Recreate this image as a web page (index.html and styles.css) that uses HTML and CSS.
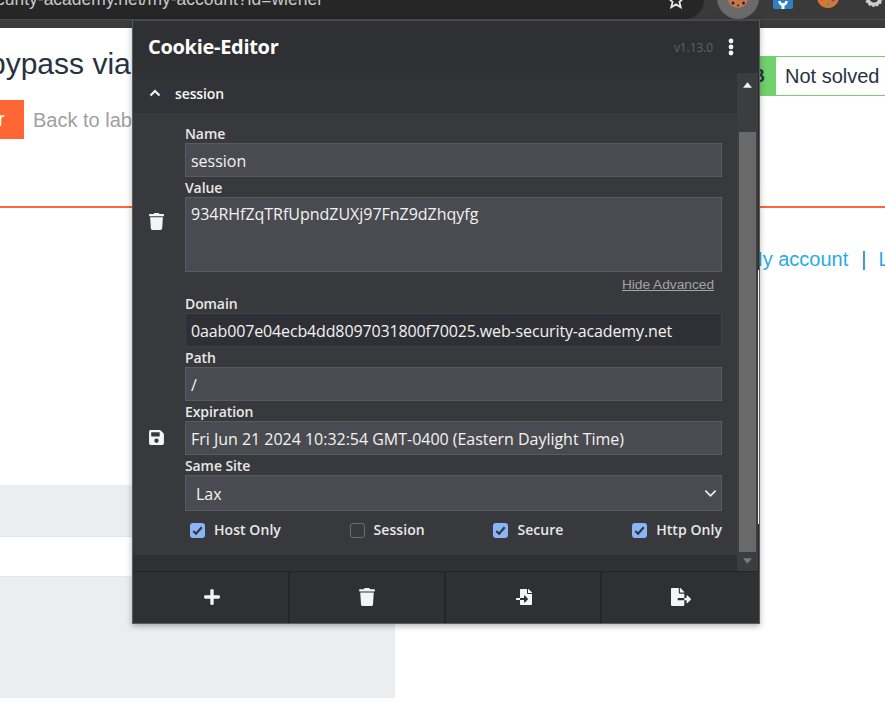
FILE: index.html
```html
<!DOCTYPE html>
<html lang="en">
<head>
<meta charset="utf-8">
<title>Cookie-Editor</title>
<link rel="stylesheet" href="styles.css">
</head>
<body>
<div class="browser">
  <div class="toolbar">
    <div class="omnibox">
      <span class="url">curity-academy.net/my-account?id=wiener</span>
      <svg class="star" viewBox="0 0 20 20"><path d="M10 2l2.4 5.6 6 .5-4.6 4 1.4 5.9L10 14.9 4.800 18l1.400-5.900-4.600-4 6-.5z" fill="none" stroke="#e8e8e8" stroke-width="2"/></svg>
    </div>
    <div class="ext-group">
      <div class="ext-active">
        <svg class="ext-cookie" viewBox="0 0 20 20"><circle cx="10" cy="10" r="10" fill="#c9764a"/><circle cx="5" cy="15" r="1.500" fill="#222"/><circle cx="15.500" cy="15" r="1.500" fill="#222"/><circle cx="10" cy="17.500" r="1" fill="#222"/></svg>
      </div>
      <svg class="ext-wrench" viewBox="0 0 20 20"><rect width="20" height="20" rx="2" fill="#2f7fc6"/><path d="M6.500 12c0 3 1.500 3.500 3.500 3.500s3.500-.5 3.500-3.500" fill="none" stroke="#fff" stroke-width="2.400"/><path d="M8.500 15v5h3v-5z" fill="#fff"/></svg>
      <svg class="ext-cookie2" viewBox="0 0 22 22"><circle cx="11" cy="11" r="11" fill="#d9772e"/><circle cx="5" cy="13" r="1.600" fill="#b53a6b"/><circle cx="11" cy="18" r="1.500" fill="#2aa3a3"/><circle cx="16" cy="14" r="1.700" fill="#6c4bb0"/></svg>
      <svg class="ext-gear" viewBox="0 0 20 20"><circle cx="10" cy="10" r="7" fill="none" stroke="#cfcfcf" stroke-width="4"/><circle cx="10" cy="10" r="9" fill="none" stroke="#cfcfcf" stroke-width="2" stroke-dasharray="2.500 2"/></svg>
    </div>
  </div>
  <div class="toolbar-edge"></div>
</div>

<main class="page">
  <header class="lab-header">
    <div class="lab-title-row">
      <h1 class="lab-title">bypass via</h1>
      <div class="lab-status"><span class="lab-tag">LAB</span><span class="lab-state">Not solved</span></div>
    </div>
    <div class="lab-actions">
      <span class="lab-button">r</span>
      <span class="lab-back">Back to lab</span>
    </div>
  </header>
  <nav class="site-nav"><span>My account</span><span class="nav-sep">|</span><span>Log out</span></nav>
  <div class="content-table">
    <div class="band band-short"></div>
    <div class="band-gap"></div>
    <div class="band band-tall"></div>
  </div>
</main>

<section class="popup">
  <div class="popup-head">
    <div class="popup-title">Cookie-Editor</div>
    <div class="popup-version">v1.13.0</div>
    <svg class="popup-menu" viewBox="0 0 6 18"><circle cx="3" cy="3" r="2.400"/><circle cx="3" cy="9" r="2.400"/><circle cx="3" cy="15" r="2.400"/></svg>
  </div>
  <div class="popup-scroll">
    <div class="scroll-content">
      <div class="cookie-head">
        <svg class="chevron-up" viewBox="0 0 12 8"><path d="M1.500 6.500L6 2l4.500 4.500"/></svg>
        <span class="cookie-name">session</span>
      </div>
      <div class="cookie-body">
        <div class="side-actions">
          <svg class="side-icon" viewBox="0 0 448 512"><path d="M432 32H312l-9.400-18.700A24 24 0 0 0 281.100 0H166.800a23.720 23.720 0 0 0-21.400 13.300L136 32H16A16 16 0 0 0 0 48v32a16 16 0 0 0 16 16h416a16 16 0 0 0 16-16V48a16 16 0 0 0-16-16zM53.200 467a48 48 0 0 0 47.900 45h245.800a48 48 0 0 0 47.900-45L416 128H32z"/></svg>
          <svg class="side-icon" viewBox="0 0 448 512"><path d="M433.941 129.941l-83.882-83.882A48 48 0 0 0 316.118 32H48C21.490 32 0 53.490 0 80v352c0 26.510 21.490 48 48 48h352c26.510 0 48-21.490 48-48V163.882a48 48 0 0 0-14.059-33.941zM224 416c-35.346 0-64-28.654-64-64 0-35.346 28.654-64 64-64s64 28.654 64 64c0 35.346-28.654 64-64 64zm96-304.520V212c0 6.627-5.373 12-12 12H76c-6.627 0-12-5.373-12-12V108c0-6.627 5.373-12 12-12h228.520c3.183 0 6.235 1.264 8.485 3.515l3.480 3.480A11.996 11.996 0 0 1 320 111.480z"/></svg>
        </div>
        <form class="fields">
          <div class="field-label">Name</div>
          <div class="field">session</div>
          <div class="field-label">Value</div>
          <div class="field field-area">934RHfZqTRfUpndZUXj97FnZ9dZhqyfg</div>
          <div class="advanced-row"><span class="advanced-link">Hide Advanced</span></div>
          <div class="field-label">Domain</div>
          <div class="field field-focus">0aab007e04ecb4dd8097031800f70025.web-security-academy.net</div>
          <div class="field-label">Path</div>
          <div class="field">/</div>
          <div class="field-label">Expiration</div>
          <div class="field">Fri Jun 21 2024 10:32:54 GMT-0400 (Eastern Daylight Time)</div>
          <div class="field-label">Same Site</div>
          <div class="field field-select"><span class="select-value">Lax</span>
            <svg class="select-chevron" viewBox="0 0 14 9"><path d="M1.500 1.500L7 7l5.500-5.500"/></svg>
          </div>
          <div class="checks">
            <label class="check"><span class="box box-on"><svg viewBox="0 0 16 16"><path d="M3.500 8.500l3 3 6-7"/></svg></span>Host Only</label>
            <label class="check"><span class="box"></span>Session</label>
            <label class="check"><span class="box box-on"><svg viewBox="0 0 16 16"><path d="M3.500 8.500l3 3 6-7"/></svg></span>Secure</label>
            <label class="check"><span class="box box-on"><svg viewBox="0 0 16 16"><path d="M3.500 8.500l3 3 6-7"/></svg></span>Http Only</label>
          </div>
        </form>
      </div>
      <div class="cookie-foot"></div>
    </div>
    <div class="scrollbar">
      <svg class="scroll-arrow" viewBox="0 0 10 6"><path d="M5 0l5 6H0z" fill="#f2f2f2"/></svg>
      <div class="scroll-thumb"></div>
      <svg class="scroll-arrow" viewBox="0 0 10 6"><path d="M5 6l5-6H0z" fill="#7a7a7a"/></svg>
    </div>
  </div>
  <div class="popup-foot">
    <div class="foot-btn foot-btn-first"><svg class="foot-icon" viewBox="0 0 448 512"><path d="M416 208H272V64c0-17.670-14.330-32-32-32h-32c-17.670 0-32 14.330-32 32v144H32c-17.670 0-32 14.330-32 32v32c0 17.670 14.330 32 32 32h144v144c0 17.670 14.330 32 32 32h32c17.670 0 32-14.330 32-32V304h144c17.670 0 32-14.330 32-32v-32c0-17.670-14.330-32-32-32z"/></svg></div>
    <div class="foot-btn"><svg class="foot-icon" viewBox="0 0 448 512"><path d="M432 32H312l-9.400-18.700A24 24 0 0 0 281.100 0H166.800a23.720 23.720 0 0 0-21.400 13.300L136 32H16A16 16 0 0 0 0 48v32a16 16 0 0 0 16 16h416a16 16 0 0 0 16-16V48a16 16 0 0 0-16-16zM53.200 467a48 48 0 0 0 47.900 45h245.800a48 48 0 0 0 47.900-45L416 128H32z"/></svg></div>
    <div class="foot-btn foot-btn-import"><svg class="foot-icon" viewBox="0 0 512 512"><path d="M16 288c-8.800 0-16 7.200-16 16v32c0 8.800 7.200 16 16 16h112v-64zm489-183L407.100 7c-4.500-4.500-10.600-7-17-7H384v128h128v-6.100c0-6.400-2.500-12.500-7-16.900zm-153 31V0H152c-13.300 0-24 10.700-24 24v264h128v-65.200c0-14.300 17.300-21.400 27.400-11.300L379 308c6.600 6.700 6.600 17.400 0 24l-95.700 96.400c-10.100 10.100-27.400 3-27.400-11.300V352H128v136c0 13.300 10.700 24 24 24h336c13.300 0 24-10.700 24-24V160H376c-13.200 0-24-10.800-24-24z"/></svg></div>
    <div class="foot-btn foot-btn-last"><svg class="foot-icon foot-icon-wide" viewBox="0 0 576 512"><path d="M384 121.900c0-6.300-2.500-12.400-7-16.900L279.100 7c-4.500-4.500-10.600-7-17-7H256v128h128zM571 308l-95.700-96.400c-10.100-10.100-27.400-3-27.400 11.300V288h-64v64h64v65.200c0 14.300 17.300 21.400 27.400 11.300L571 332c6.600-6.700 6.600-17.400 0-24zm-379 28v-32c0-8.800 7.200-16 16-16h176V160H248c-13.200 0-24-10.800-24-24V0H24C10.700 0 0 10.700 0 24v464c0 13.300 10.700 24 24 24h336c13.300 0 24-10.700 24-24V352H208c-8.800 0-16-7.200-16-16z"/></svg></div>
  </div>
  <div class="popup-edge-light"></div>
</section>
</body>
</html>
```
FILE: styles.css
```css
* { box-sizing: border-box; }
html, body { margin: 0; padding: 0; }
body {
  width: 885px;
  height: 702px;
  overflow: hidden;
  background: #fff;
  position: relative;
  font-family: "Liberation Sans", Arial, sans-serif;
}

/* Browser chrome */
.browser { height: 28px; background: #3a3a3a; }
.toolbar { height: 19px; display: flex; position: relative; overflow: hidden; }
.toolbar-edge { height: 9px; background: #3c3c3c; border-top: 1px solid #4c4c4c; }
.omnibox {
  width: 704px;
  height: 19px;
  background: #262626;
  border-bottom-right-radius: 19px;
  position: relative;
  overflow: hidden;
  flex: none;
}
.url {
  position: absolute;
  left: -4px;
  top: -11px;
  font: 17.500px/20px "Liberation Sans", sans-serif;
  color: #c8c8c8;
  white-space: nowrap;
}
.star { position: absolute; left: 667px; top: -9px; width: 18px; height: 18px; }
.ext-group { flex: 1; position: relative; }
.ext-active {
  position: absolute;
  left: 13px;
  top: -23px;
  width: 42px;
  height: 42px;
  border-radius: 50%;
  background: #6a6a6a;
}
.ext-cookie { position: absolute; left: 11px; top: 11px; width: 20px; height: 20px; }
.ext-wrench { position: absolute; left: 69px; top: -11px; width: 20px; height: 20px; }
.ext-cookie2 { position: absolute; left: 113px; top: -14px; width: 22px; height: 22px; }
.ext-gear { position: absolute; left: 161px; top: -11px; width: 18px; height: 18px; }

/* Page underneath */
.lab-header { height: 180px; border-bottom: 2px solid #ff6633; }
.lab-title-row {
  height: 72px;
  display: flex;
  justify-content: space-between;
  align-items: center;
}
.lab-title {
  margin: 0 0 0 -11px;
  font-size: 30px;
  line-height: 40px;
  font-weight: 400;
  color: #28323e;
  align-self: flex-start;
  padding-top: 16px;
}
.lab-status {
  width: 161px;
  height: 40px;
  align-self: flex-end;
  margin-bottom: 4px;
  display: flex;
  border: 1px solid #70d16d;
  border-right: 0;
  font-size: 20px;
  line-height: 38px;
}
.lab-tag {
  width: 51px;
  flex: none;
  background: #70d16d;
  color: #28323e;
  font-weight: 700;
  font-size: 18px;
  text-align: right;
  padding-right: 11px;
}
.lab-state { padding-left: 9px; color: #28323e; white-space: nowrap; }
.lab-actions { display: flex; align-items: center; height: 39px; }
.lab-button {
  width: 24px;
  height: 39px;
  background: #ff6633;
  color: #fff;
  font-size: 20px;
  line-height: 39px;
  margin-right: 9px;
  text-indent: -2px;
}
.lab-back { color: #a0a0a0; font-size: 20px; white-space: nowrap; padding-top: 2px; }

.site-nav {
  display: flex;
  margin-top: 39px;
  padding-left: 746px;
  color: #29abe2;
  font-size: 20px;
  line-height: 24px;
  white-space: nowrap;
}
.nav-sep { margin: 0 12px 0 13px; color: #1d7fb8; }

.content-table { width: 395px; margin-top: 214px; }
.band { background: #eaeef0; }
.band-short { height: 52px; border-bottom: 1px solid #e6e6e6; }
.band-gap { height: 40px; border-bottom: 1px solid #e6e6e6; }
.band-tall { height: 121px; }

/* Extension popup */
.popup {
  position: absolute;
  left: 132px;
  top: 20px;
  width: 628px;
  height: 604px;
  display: flex;
  flex-direction: column;
  background: #2f3033;
  border: 1px solid #5c5c5c;
  border-top-color: #4a4a4a;
  box-shadow: 0 2px 6px rgba(0, 0, 0, .3);
  font-family: "Open Sans", "Noto Sans", sans-serif;
  color: #f2f2f2;
}
.popup-head {
  height: 52px;
  flex: none;
  display: flex;
  align-items: center;
  padding: 0 25px 0 15px;
}
.popup-title { font-size: 20px; font-weight: 700; letter-spacing: -.3px; color: #fff; flex: 1; margin-top: -2px; }
.popup-version { font-size: 12px; letter-spacing: -.1px; color: #5f6063; margin-right: 15px; }
.popup-menu { width: 6px; height: 18px; fill: #f4f4f4; }

.popup-scroll { height: 498px; flex: none; display: flex; }
.scroll-content { flex: 1; display: flex; flex-direction: column; min-width: 0; }
.cookie-head {
  height: 40px;
  flex: none;
  display: flex;
  align-items: center;
  background: #323337;
  padding-left: 16px;
}
.chevron-up { width: 12px; height: 8px; fill: none; stroke: #f4f4f4; stroke-width: 2.200; margin-right: 14px; }
.cookie-name { font-size: 14px; font-weight: 600; letter-spacing: -.12px; color: #f4f4f4; }
.cookie-body { height: 442px; flex: none; display: flex; background: #38393d; }
.side-actions {
  width: 52px;
  flex: none;
  display: flex;
  flex-direction: column;
  justify-content: space-between;
  align-items: center;
  padding: 100px 5px 109px 0;
}
.side-icon { width: 15px; height: 17px; fill: #f4f4f4; }
.fields { flex: 1; padding: 10px 15px 0 0; min-width: 0; }
.field-label {
  height: 20px;
  font-size: 14px;
  line-height: 22px;
  font-weight: 600;
  letter-spacing: -.1px;
  color: #e8e8e8;
}
.field {
  height: 34px;
  background: #4a4b50;
  border: 1px solid #5a5b5f;
  padding: 0 5px;
  font-size: 16px;
  line-height: 34px;
  letter-spacing: -.02px;
  color: #f2f2f2;
  white-space: nowrap;
  overflow: hidden;
}
.field-area { height: 75px; line-height: 32px; }
.field-focus { background: #2f3035; border-color: #3f4044; letter-spacing: -.14px; }
.field-select {
  height: 36px;
  line-height: 36px;
  padding: 0 4px 0 10px;
  display: flex;
  justify-content: space-between;
  align-items: center;
}
.select-value { padding-top: 1px; }
.select-chevron { width: 13px; height: 9px; fill: none; stroke: #f0f0f0; stroke-width: 1.800; }
.advanced-row { height: 21px; text-align: right; padding-right: 8px; }
.advanced-link {
  font-family: "Liberation Sans", sans-serif;
  font-size: 13.700px;
  line-height: 22px;
  color: #a3a3a3;
  text-decoration: underline;
}
.checks {
  display: flex;
  justify-content: space-between;
  padding-left: 5px;
  margin-top: 9px;
}
.check {
  display: flex;
  align-items: center;
  gap: 9px;
  font-size: 14px;
  line-height: 20px;
  font-weight: 600;
  letter-spacing: .06px;
  color: #e8e8e8;
}
.box {
  width: 15px;
  height: 15px;
  flex: none;
  border-radius: 3px;
  border: 1px solid #6b6c70;
  background: #38393d;
  display: block;
}
.box-on { border: 0; background: #8ab4f8; }
.box svg { display: block; width: 15px; height: 15px; fill: none; stroke: #333438; stroke-width: 2.200; }
.cookie-foot { flex: 1; background: #2f3033; }

.scrollbar {
  width: 22px;
  flex: none;
  background: #3c3d3f;
  border-right: 1px solid #2a2b2d;
  display: flex;
  flex-direction: column;
  align-items: center;
}
.scroll-arrow { width: 9px; height: 6px; flex: none; margin: 9px 0; }
.scroll-thumb { width: 17px; margin: 35px 0 0; height: 420px; flex: none; background: #6a6a6a; }
.scroll-thumb + .scroll-arrow { margin-top: 6px; }

.popup-foot {
  height: 52px;
  flex: none;
  display: flex;
  background: #2f3033;
  border-top: 1px solid #232427;
}
.foot-btn {
  width: 156px;
  padding-bottom: 2px;
  flex: none;
  display: flex;
  align-items: center;
  justify-content: center;
  border-right: 2px solid #242528;
}
.foot-btn-first { width: 157px; padding-left: 2px; }
.foot-btn-import { padding-left: 2px; }
.foot-btn-last { flex: 1; border-right: 0; }
.foot-icon { width: 16px; height: 18px; fill: #f4f4f4; }
.foot-icon-wide { width: 20px; }
.popup-edge-light {
  position: absolute;
  right: 0;
  top: 249px;
  width: 1px;
  height: 254px;
  background: #f0f0f0;
}
```
